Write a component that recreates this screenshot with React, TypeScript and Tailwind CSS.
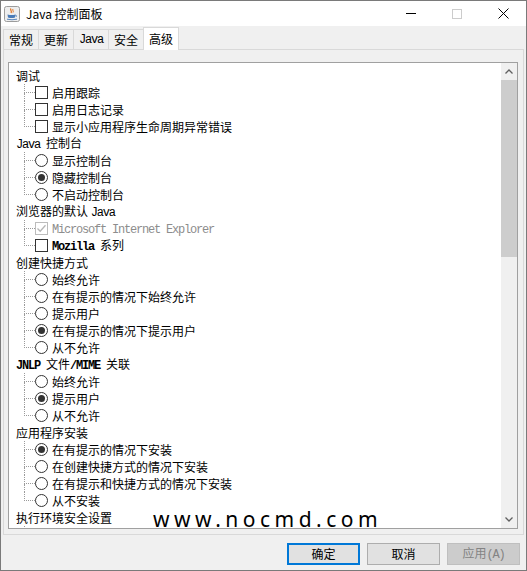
import React from "react";

type Item = {
  kind: "check" | "radio";
  label: React.ReactNode;
  checked?: boolean;
  disabled?: boolean;
};

type Group = { title: React.ReactNode; items: Item[] };

const mono = "font-['Liberation_Mono',monospace] text-[12px] tracking-[-1.2px]";

const groups: Group[] = [
  {
    title: "调试",
    items: [
      { kind: "check", label: "启用跟踪" },
      { kind: "check", label: "启用日志记录" },
      { kind: "check", label: "显示小应用程序生命周期异常错误" },
    ],
  },
  {
    title: (
      <>
        <span className={mono}>Java </span>控制台
      </>
    ),
    items: [
      { kind: "radio", label: "显示控制台" },
      { kind: "radio", label: "隐藏控制台", checked: true },
      { kind: "radio", label: "不启动控制台" },
    ],
  },
  {
    title: (
      <>
        浏览器的默认 <span className={mono}>Java</span>
      </>
    ),
    items: [
      {
        kind: "check",
        label: <span className={`${mono} text-[#8d8d8d]`}>Microsoft Internet Explorer</span>,
        checked: true,
        disabled: true,
      },
      {
        kind: "check",
        label: (
          <>
            <span className={`${mono} font-bold`}>Mozilla </span>系列
          </>
        ),
      },
    ],
  },
  {
    title: "创建快捷方式",
    items: [
      { kind: "radio", label: "始终允许" },
      { kind: "radio", label: "在有提示的情况下始终允许" },
      { kind: "radio", label: "提示用户" },
      { kind: "radio", label: "在有提示的情况下提示用户", checked: true },
      { kind: "radio", label: "从不允许" },
    ],
  },
  {
    title: (
      <>
        <span className={`${mono} font-bold`}>JNLP </span>文件
        <span className={`${mono} font-bold`}>/MIME </span>关联
      </>
    ),
    items: [
      { kind: "radio", label: "始终允许" },
      { kind: "radio", label: "提示用户", checked: true },
      { kind: "radio", label: "从不允许" },
    ],
  },
  {
    title: "应用程序安装",
    items: [
      { kind: "radio", label: "在有提示的情况下安装", checked: true },
      { kind: "radio", label: "在创建快捷方式的情况下安装" },
      { kind: "radio", label: "在有提示和快捷方式的情况下安装" },
      { kind: "radio", label: "从不安装" },
    ],
  },
  {
    title: "执行环境安全设置",
    items: [
      { kind: "check", label: "显示沙箱警告标题" },
      { kind: "check", label: "允许用户接受安全请求" },
    ],
  },
];

function Control({ item }: { item: Item }) {
  if (item.kind === "radio") {
    return (
      <span className="flex h-[13px] w-[13px] items-center justify-center rounded-full border border-[#333333] bg-white">
        {item.checked && <span className="h-[7px] w-[7px] rounded-full bg-[#333333]" />}
      </span>
    );
  }
  return (
    <span
      className={`flex h-[13px] w-[13px] items-center justify-center border bg-white ${
        item.disabled ? "border-[#bcbcbc]" : "border-[#333333]"
      }`}
    >
      {item.checked && (
        <svg width="11" height="11" viewBox="0 0 11 11">
          <path d="M1.5 5.5 L4.2 8.2 L9.5 2.2" fill="none" stroke={item.disabled ? "#b5b5b5" : "#333"} strokeWidth="1.3" />
        </svg>
      )}
    </span>
  );
}

function TreeGroup({ group }: { group: Group }) {
  return (
    <div>
      <div className="flex h-[17px] items-center whitespace-nowrap pl-[7px]">
        <span>{group.title}</span>
      </div>
      {group.items.map((item, i) => {
        const last = i === group.items.length - 1;
        return (
          <div key={i} className="flex h-[17px] items-center whitespace-nowrap pl-[15px]">
            <div className="flex h-full w-[11px] flex-col">
              <div className="h-[9px] border-b border-l border-dotted border-[#9a9a9a]" />
              <div className={`flex-1 border-l border-dotted ${last ? "border-transparent" : "border-[#9a9a9a]"}`} />
            </div>
            <Control item={item} />
            <span className="ml-[4px]">{item.label}</span>
          </div>
        );
      })}
    </div>
  );
}

function JavaIcon() {
  return (
    <svg width="16" height="16" viewBox="0 0 16 16">
      <rect x="0.5" y="0.5" width="15" height="15" rx="2" fill="#eeeeee" stroke="#9c9c9c" />
      <path d="M7 2.5 C5.5 4 8.5 5 7 7" fill="none" stroke="#e2711d" strokeWidth="1.2" />
      <path d="M9 3 C8 4.2 10 5 9 6.5" fill="none" stroke="#e2711d" strokeWidth="1" />
      <path d="M3.5 8.5 Q8 9.5 11.5 8.5 L11 11.5 Q7.5 12.5 4 11.5 Z" fill="#4a7bb7" />
      <path d="M11.3 9.2 Q13.2 9.4 12.2 10.8" fill="none" stroke="#4a7bb7" strokeWidth="0.9" />
      <path d="M3 13.2 Q8 14.3 13 13.2" fill="none" stroke="#4a7bb7" strokeWidth="0.9" />
    </svg>
  );
}

export default function App() {
  const tabs = ["常规", "更新", "Java", "安全"];
  return (
    <div className="relative flex h-[571px] w-[527px] flex-col overflow-hidden border border-[#7a7a7a] bg-[#f0f0f0] font-['Noto_Sans_CJK_SC',sans-serif] text-[12px] leading-none text-black">
      {/* title bar */}
      <div className="flex h-[25px] items-center bg-white">
        <div className="ml-[3px] flex items-center">
          <JavaIcon />
        </div>
        <span className="ml-[6px] text-[12px]">Java 控制面板</span>
        <div className="ml-auto flex h-full">
          <div className="flex w-[46px] items-center justify-center">
            <div className="h-px w-[10px] bg-black" />
          </div>
          <div className="flex w-[46px] items-center justify-center">
            <div className="h-[10px] w-[10px] border border-[#cccccc]" />
          </div>
          <div className="flex w-[46px] items-center justify-center">
            <svg width="11" height="11" viewBox="0 0 11 11">
              <path d="M0.5 0.5 L10.5 10.5 M10.5 0.5 L0.5 10.5" stroke="#000" strokeWidth="1" />
            </svg>
          </div>
        </div>
      </div>

      {/* tabs */}
      <div className="relative z-10 flex h-[23px] items-end pl-[2px]">
        {tabs.map((t) => (
          <div
            key={t}
            className="-mr-px flex h-[20px] items-center border border-b-0 border-[#d9d9d9] bg-[#f0f0f0] px-[5px]"
          >
            {t === "Java" ? <span className={mono}>Java</span> : t}
          </div>
        ))}
        <div className="-mb-px flex h-[23px] items-center border border-b-0 border-[#d9d9d9] bg-white px-[5px] pb-[1px]">
          高级
        </div>
      </div>

      {/* panel */}
      <div className="mx-[2px] h-[486px] border border-[#d9d9d9] pb-[5px] pl-[4px] pr-[5px] pt-[12px]">
        <div className="flex h-full border border-[#a0a0a0] bg-white">
          <div className="flex-1 overflow-hidden pt-[4px]">
            {groups.map((g, i) => (
              <TreeGroup key={i} group={g} />
            ))}
          </div>
          <div className="flex w-[16px] flex-col bg-[#f0f0f0]">
            <div className="flex h-[17px] items-center justify-center">
              <svg width="8" height="5" viewBox="0 0 8 5">
                <path d="M0.5 4.5 L4 1 L7.5 4.5" fill="none" stroke="#606060" strokeWidth="1.3" />
              </svg>
            </div>
            <div className="h-[177px] bg-[#cdcdcd]" />
            <div className="flex-1" />
            <div className="flex h-[17px] items-center justify-center">
              <svg width="8" height="5" viewBox="0 0 8 5">
                <path d="M0.5 0.5 L4 4 L7.5 0.5" fill="none" stroke="#606060" strokeWidth="1.3" />
              </svg>
            </div>
          </div>
        </div>
      </div>

      {/* buttons */}
      <div className="mt-[8px] flex justify-end gap-[7px] pr-[6px]">
        <button className="flex h-[22px] w-[73px] items-center justify-center border-2 border-[#0078d7] bg-[#e1e1e1]">
          确定
        </button>
        <button className="flex h-[22px] w-[73px] items-center justify-center border border-[#adadad] bg-[#e1e1e1]">
          取消
        </button>
        <button className="flex h-[22px] w-[73px] items-center justify-center border border-[#bfbfbf] bg-[#cccccc] text-[#838383]">
          <span>
            应用<span className={mono}>(A)</span>
          </span>
        </button>
      </div>

      {/* watermark */}
      <div className="pointer-events-none absolute left-[152px] top-[508px] font-['Noto_Sans',sans-serif] text-[21px] leading-none tracking-[4.5px] text-black">
        www.nocmd.com
      </div>
    </div>
  );
}
